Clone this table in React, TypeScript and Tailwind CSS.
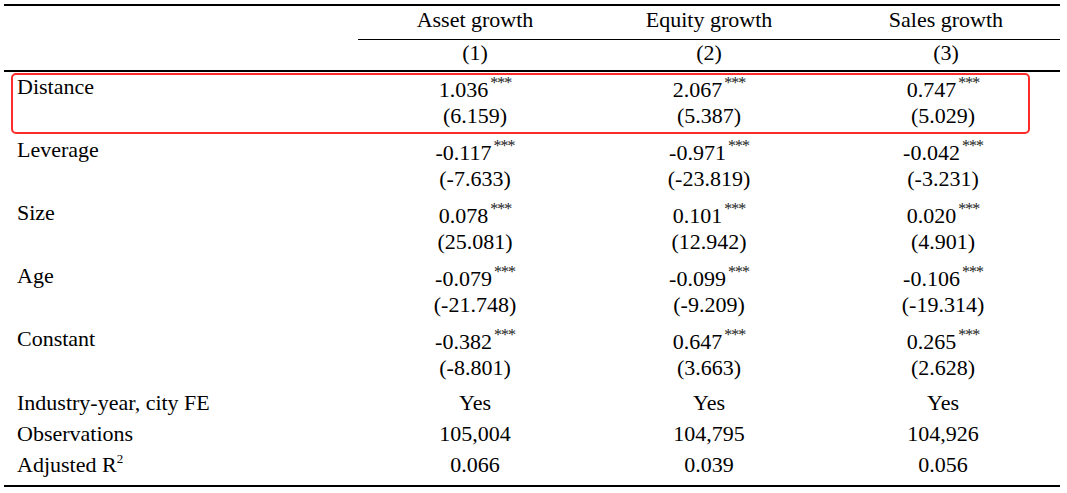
import React from 'react';

type Row = {
	label: string;
	coefs: { value: string; stat: string }[];
};

const rows: Row[] = [
	{
		label: 'Distance',
		coefs: [
			{ value: '1.036', stat: '(6.159)' },
			{ value: '2.067', stat: '(5.387)' },
			{ value: '0.747', stat: '(5.029)' },
		],
	},
	{
		label: 'Leverage',
		coefs: [
			{ value: '-0.117', stat: '(-7.633)' },
			{ value: '-0.971', stat: '(-23.819)' },
			{ value: '-0.042', stat: '(-3.231)' },
		],
	},
	{
		label: 'Size',
		coefs: [
			{ value: '0.078', stat: '(25.081)' },
			{ value: '0.101', stat: '(12.942)' },
			{ value: '0.020', stat: '(4.901)' },
		],
	},
	{
		label: 'Age',
		coefs: [
			{ value: '-0.079', stat: '(-21.748)' },
			{ value: '-0.099', stat: '(-9.209)' },
			{ value: '-0.106', stat: '(-19.314)' },
		],
	},
	{
		label: 'Constant',
		coefs: [
			{ value: '-0.382', stat: '(-8.801)' },
			{ value: '0.647', stat: '(3.663)' },
			{ value: '0.265', stat: '(2.628)' },
		],
	},
];

const grid = 'grid grid-cols-[354px_234px_234px_234px]';

function Stars() {
	return (
		<span className="relative -top-[9px] ml-[2px] text-[16px] leading-none tracking-[-1px] text-[#222]">
			***
		</span>
	);
}

export default function App() {
	return (
		<div className="min-h-screen bg-white pt-[4px] text-black [font-family:'Liberation_Serif','Times_New_Roman',serif] text-[22px] leading-[26px]">
			<div className="ml-[4px] w-[1056px] border-t-2 border-b-2 border-black pb-[5px]">
				{/* header */}
				<div className={grid}>
					<div />
					<div className="col-span-3 grid grid-cols-3 border-b border-black pb-[6px] pt-[1px]">
						<div className="text-center">Asset growth</div>
						<div className="text-center">Equity growth</div>
						<div className="text-center pl-[6px]">Sales growth</div>
					</div>
				</div>
				<div className={`${grid} border-b-2 border-black pb-[4px]`}>
					<div />
					<div className="text-center">(1)</div>
					<div className="text-center">(2)</div>
					<div className="text-center pl-[6px]">(3)</div>
				</div>

				{/* coefficients */}
				{rows.map((row, i) => (
					<div key={row.label} className={`${grid} relative h-[63px]`}>
						{i === 0 && (
							<div className="pointer-events-none absolute left-[7px] top-[1px] h-[61px] w-[1019px] rounded-[5px] border-2 border-[#ff2a2a]" />
						)}
						<div className="pl-[13px] pt-[2px]">{row.label}</div>
						{row.coefs.map((c, j) => (
							<div key={j} className="flex flex-col items-center pt-[5px]">
								<div className="whitespace-nowrap">
									{c.value}
									<Stars />
								</div>
								<div>{c.stat}</div>
							</div>
						))}
					</div>
				))}

				{/* footer stats */}
				<div className={`${grid} h-[31px] pt-[3px]`}>
					<div className="pl-[13px]">Industry-year, city FE</div>
					<div className="text-center">Yes</div>
					<div className="text-center">Yes</div>
					<div className="text-center">Yes</div>
				</div>
				<div className={`${grid} h-[31px] pt-[3px]`}>
					<div className="pl-[13px]">Observations</div>
					<div className="text-center">105,004</div>
					<div className="text-center">104,795</div>
					<div className="text-center">104,926</div>
				</div>
				<div className={`${grid} h-[31px] pt-[3px]`}>
					<div className="pl-[13px]">
						Adjusted R
						<span className="relative -top-[9px] text-[13px] leading-none">2</span>
					</div>
					<div className="text-center">0.066</div>
					<div className="text-center">0.039</div>
					<div className="text-center">0.056</div>
				</div>
			</div>
		</div>
	);
}
